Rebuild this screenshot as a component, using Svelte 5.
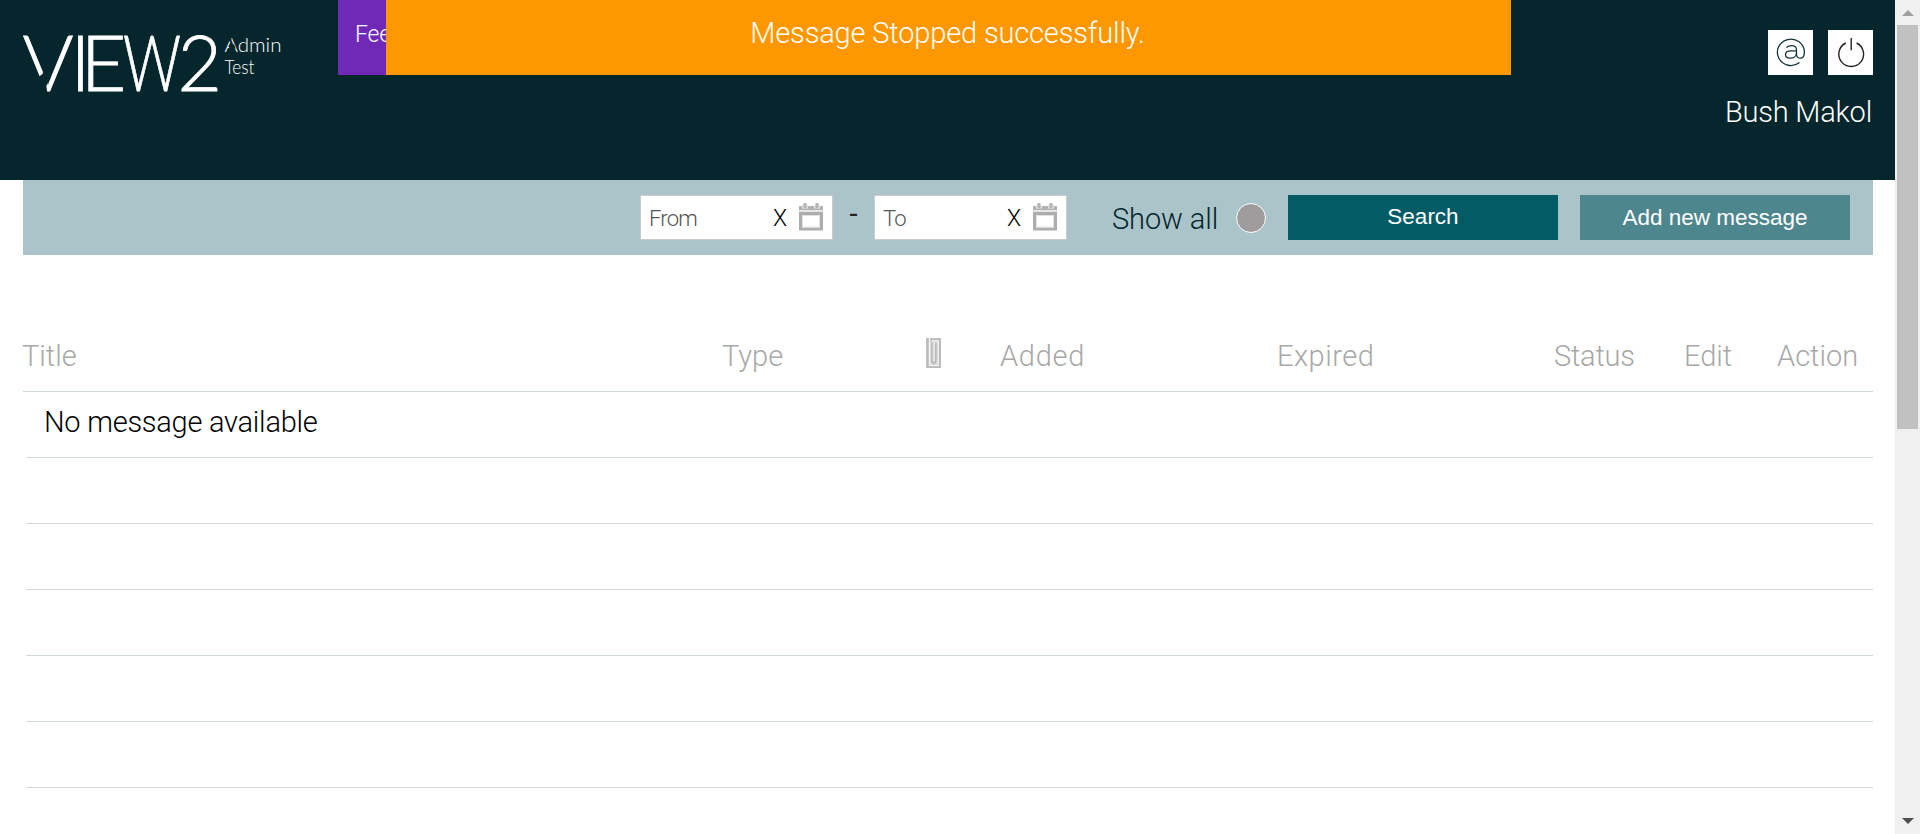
<script>
  const columns = [
    { label: 'Title', cls: 'title' },
    { label: 'Type', cls: 'type' },
    { label: '', cls: 'clip' },
    { label: 'Added', cls: 'added' },
    { label: 'Expired', cls: 'expired' },
    { label: 'Status', cls: 'status' },
    { label: 'Edit', cls: 'edit' },
    { label: 'Action', cls: 'action' }
  ];
  const rows = ['No message available', '', '', '', '', '', ''];
</script>

{#snippet dateField(label)}
  <div class="date">
    <span class="placeholder">{label}</span>
    <span class="clear">X</span>
    <svg class="calendar" width="24" height="28" viewBox="0 0 24 28">
      <rect y="3" width="24" height="4" fill="#b2b2b2" />
      <path d="M3 2h6v3.500H3zM15 2h6v3.500h-6z" fill="#e2e2e2" />
      <path d="M6 0v5M18 0v5" stroke="#b4b4b4" stroke-width="3" />
      <rect y="7" width="24" height="2" fill="#e6e6e6" />
      <rect x="1.500" y="10.500" width="21" height="15.500" fill="#fff" stroke="#adadad" stroke-width="3" />
      <rect x="3.500" y="12.500" width="17" height="11.500" fill="none" stroke="#e2e2e2" />
    </svg>
  </div>
{/snippet}

<div class="window">
  <div class="page">
    <header>
      <svg class="logo" width="270" height="66" viewBox="0 0 270 66">
        <g class="mark">
          <text x="-.5" y="57" textLength="51" lengthAdjust="spacingAndGlyphs">V</text>
          <text x="47.500" y="57">I</text>
          <text x="57.500" y="57" textLength="46" lengthAdjust="spacingAndGlyphs">E</text>
          <text x="100" y="57" textLength="58" lengthAdjust="spacingAndGlyphs">W</text>
          <text x="154.500" y="57" textLength="44.500" lengthAdjust="spacingAndGlyphs">2</text>
        </g>
        <path d="M14 44l5.500-4 1.500-4 6.500 8-4.200 8 1.200 8H16z" fill="#05262d" />
        <g class="sub">
          <text x="201.500" y="18" textLength="57" lengthAdjust="spacingAndGlyphs">Admin</text>
          <text x="201.500" y="39.500" textLength="30" lengthAdjust="spacingAndGlyphs">Test</text>
        </g>
        <path d="M205.800 14.600l1.400-4h3.900l1.700 4zM205 7l3.200-4.500.4 3-1.100 2.500z" fill="#05262d" />
      </svg>
      <div class="feedback">Feedback</div>
      <div class="account">
        <div class="tools">
          <button class="tool" aria-label="Contact">
            <svg width="45" height="45" viewBox="0 0 45 45" fill="none" stroke="#16353b" stroke-width="1.300">
              <path d="M31.500 32.500A13.500 13.200 0 1 1 36.400 22c0 4.200-1.500 6.200-4 6.200-2.600 0-3.900-1.500-3.900-4V20c0-2.900-1.500-4.300-4.700-4.300-2.300 0-4 .5-5.400 1.700" />
              <path d="M28.500 20.800h-5.700c-3.600 0-5.300 1.200-5.300 3.700 0 2.400 1.700 3.700 4.600 3.700 3.800 0 6.400-2 6.400-5.200" />
            </svg>
          </button>
          <button class="tool" aria-label="Log out">
            <svg width="45" height="45" viewBox="0 0 45 45" fill="none" stroke="#222" stroke-width="1.400">
              <path d="M23.200 8v12.300M17.800 13a12.400 12.400 0 1 0 10.800 0" />
            </svg>
          </button>
        </div>
        <div class="user">Bush Makol</div>
      </div>
      <div class="toast"><span>Message Stopped successfully.</span></div>
    </header>

    <section class="filters">
      {@render dateField('From')}
      <span class="dash">-</span>
      {@render dateField('To')}
      <span class="showall">Show all</span>
      <span class="dot"></span>
      <button class="btn search">Search</button>
      <button class="btn add">Add new message</button>
    </section>

    <section class="table">
      <div class="head">
        {#each columns as c}
          <div class={c.cls}>
            {#if c.cls === 'clip'}
              <svg width="15" height="30" viewBox="0 0 15 30" fill="none">
                <rect width="15" height="30" fill="#bdbdbd" />
                <path d="M3.500 0v27.300h8.700V3H5.500" stroke="#f6f6f6" stroke-width="1.300" />
                <rect x="4.200" y="3.500" width="7.400" height="23" fill="#e2e2e2" />
                <path d="M5.900 4v18.500q0 2.500 2 2.500t2-2.500V4.500" stroke="#b3b3b3" stroke-width="1.400" />
              </svg>
            {:else}<span>{c.label}</span>{/if}
          </div>
        {/each}
      </div>
      {#each rows as row}
        <div class="row">{#if row}<span>{row}</span>{/if}</div>
      {/each}
    </section>
  </div>
  <div class="scrollbar">
    <i class="up"></i>
    <div class="thumb"></div>
    <i class="down"></i>
  </div>
</div>

<style>
  :global(body) { margin: 0; overflow: hidden; }
  .window {
    display: flex; width: 1920px; height: 834px; overflow: hidden; background: #fff;
    font-family: Roboto, sans-serif; font-weight: 300; font-size: 29px; color: #000;
  }
  .page { width: 1895px; overflow: hidden; }
  button { border: 0; padding: 0; font: inherit; color: inherit; display: block; }
  header {
    position: relative; box-sizing: border-box; height: 180px; padding: 0 22px 0 23px;
    background: #05262d; color: #fff; display: flex; align-items: flex-start;
  }
  .logo { margin-top: 34px; flex: none; overflow: visible; }
  .mark { font: 300 76px Lato, sans-serif; fill: #fff; stroke: #fff; stroke-width: .8px; }
  .sub { font: 300 20px Lato, sans-serif; fill: #fff; }
  .feedback {
    box-sizing: border-box; margin-left: 45px; width: 140px; height: 75px; padding-left: 17px;
    background: #7029b7; font-size: 23px; line-height: 70px; letter-spacing: -.2px;
  }
  .toast {
    position: absolute; left: 385.500px; top: 0; width: 1125px; height: 75px;
    background: #ff9800; text-align: center; line-height: 66px; letter-spacing: -.15px; text-indent: -1px;
  }
  .account { margin-left: auto; padding-top: 30px; display: flex; flex-direction: column; align-items: flex-end; }
  .tools { display: flex; gap: 15px; }
  .tool { width: 45px; height: 45px; background: #fff; }
  .tool svg { display: block; }
  .user { margin-top: 18px; line-height: 38px; letter-spacing: -.2px; margin-right: 1px; }
  .filters {
    box-sizing: border-box; margin: 0 22px 0 23px; height: 75px; padding: 15px 23px 15px 617px;
    background: #abc4c9; display: flex; align-items: flex-start;
  }
  .date {
    box-sizing: border-box; width: 193px; height: 45px; border: 1px solid #c8cccd; background: #fff;
    padding: 0 9px 0 8px; display: flex; align-items: center; flex: none;
  }
  .placeholder { flex: 1; color: #555; font-size: 22px; letter-spacing: -.8px; padding-top: 2px; }
  .clear { font-size: 23px; width: 26px; padding-top: 2px; }
  .calendar { margin-top: -2px; }
  .dash { width: 41px; text-align: center; line-height: 39px; font-weight: 400; color: #222; flex: none; }
  .showall { margin-left: 45px; width: 124px; line-height: 48px; color: #05262d; letter-spacing: -.1px; flex: none; }
  .dot { box-sizing: border-box; width: 30px; height: 30px; margin-top: 8px; border-radius: 50%; border: 1px solid #fff; background: #9e9c9d; flex: none; }
  .btn { width: 270px; height: 45px; flex: none; color: #fff; font: 400 22.500px "Liberation Sans", Arial, sans-serif; }
  .search { margin-left: 22px; background: #035c65; padding-bottom: 1px; }
  .add { margin-left: 22px; background: #4e868e; }
  .table { margin: 0 22px 0 23px; padding-top: 67px; }
  .head { display: flex; height: 69px; border-bottom: 1px solid #cddad9; color: #a8a8a8; }
  .head span { line-height: 69px; }
  .title { width: 700px; text-indent: -1px; }
  .type { width: 203px; text-indent: -1px; }
  .clip { width: 74px; padding-top: 16px; }
  .added { width: 277px; letter-spacing: .7px; }
  .expired { width: 277px; letter-spacing: .5px; }
  .status { width: 130px; letter-spacing: -.2px; }
  .edit { width: 93px; }
  .row { height: 65px; margin-left: 3px; border-bottom: 1px solid #cddad9; padding-left: 18px; line-height: 60px; letter-spacing: -.25px; }
  .scrollbar { width: 25px; height: 834px; background: #f0f0f0; display: flex; flex-direction: column; align-items: center; }
  .up, .down { width: 0; height: 0; border: 6px solid transparent; }
  .up { border-top: 0; border-bottom-color: #a0a0a0; margin: 10px 0 9px; }
  .thumb { width: 21px; height: 404px; background: #c1c1c1; }
  .down { border-bottom: 0; border-top-color: #505050; margin: auto 0 10px; }
</style>
